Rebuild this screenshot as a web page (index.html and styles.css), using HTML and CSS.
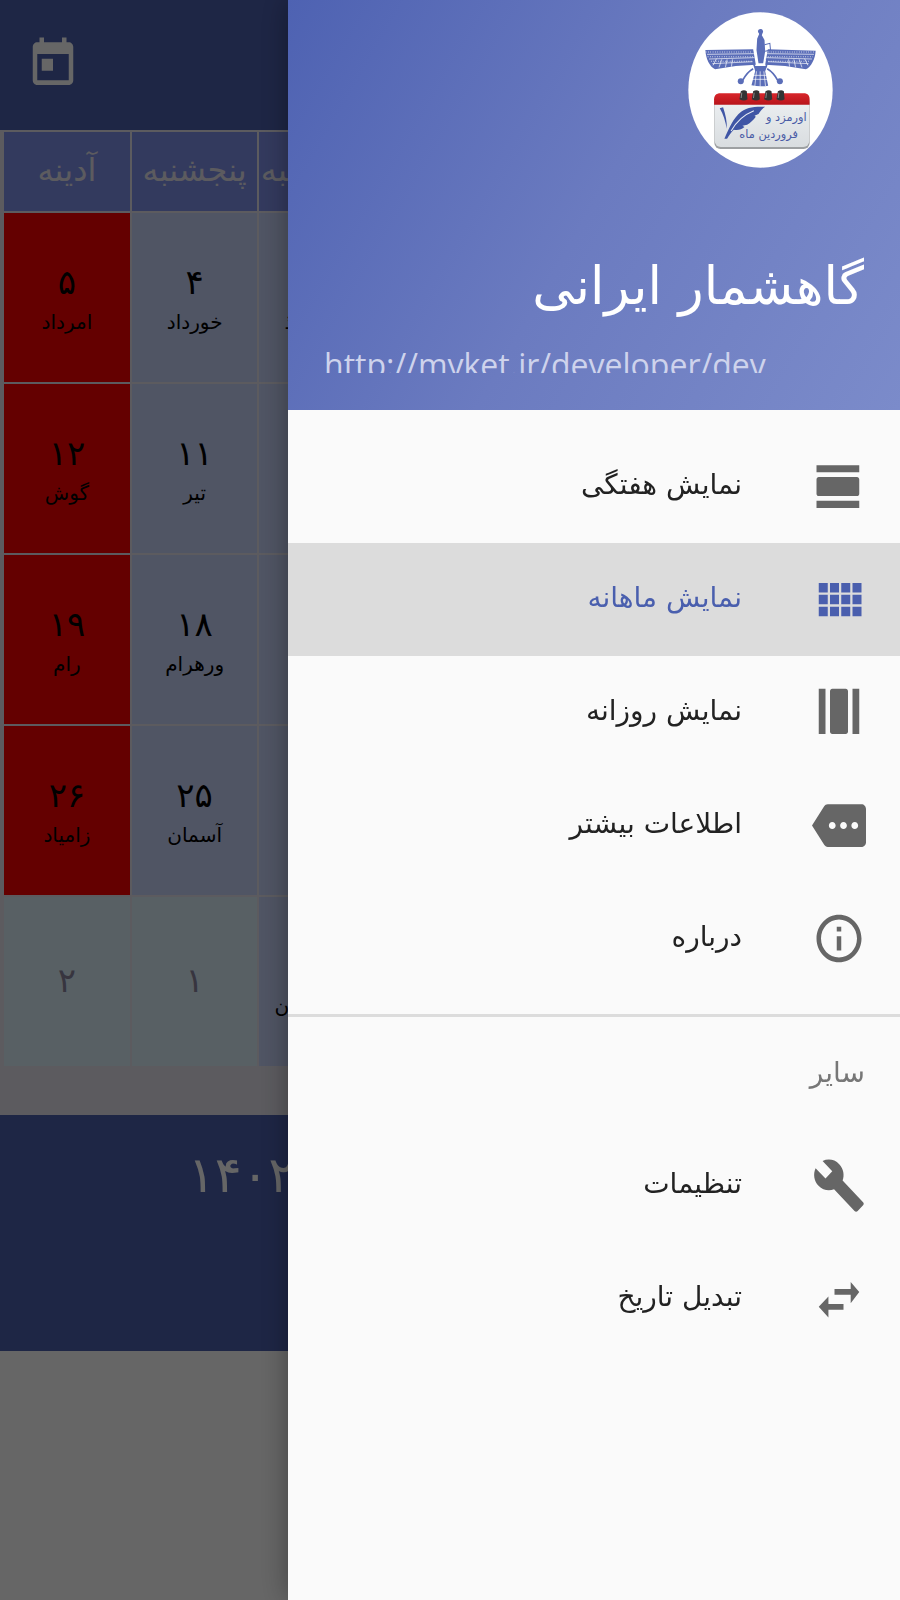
FILE: index.html
```html
<!DOCTYPE html>
<html lang="fa" dir="rtl">
<head>
  <meta charset="UTF-8" />
  <meta name="viewport" content="width=device-width, initial-scale=1.0" />
  <title>گاهشمار ایرانی</title>
  <link rel="stylesheet" href="styles.css">
</head>
<body>
  <div class="app">
    <header class="toolbar">
      <button class="today" type="button" aria-label="امروز">
        <svg class="icon" viewBox="0 0 24 24" preserveAspectRatio="none"><path d="M19 3h-1V1h-2v2H8V1H6v2H5c-1.11 0-1.99.9-1.99 2L3 19c0 1.1.89 2 2 2h14c1.1 0 2-.9 2-2V5c0-1.1-.9-2-2-2zm0 16H5V8h14v11zM7 10h5v5H7v-5z"/></svg>
      </button>
    </header>

    <main class="month">
      <table class="calendar">
        <thead>
          <tr><th></th><th></th><th></th><th></th><th>چهارشنبه</th><th>پنجشنبه</th><th>آدینه</th></tr>
        </thead>
        <tbody>
          <tr>
            <td></td><td></td><td></td><td></td>
            <td><b></b><span>سپندارمذ</span></td>
            <td><b>۴</b><span>خورداد</span></td>
            <td class="friday"><b>۵</b><span>امرداد</span></td>
          </tr>
          <tr>
            <td></td><td></td><td></td><td></td><td></td>
            <td><b>۱۱</b><span>تیر</span></td>
            <td class="friday"><b>۱۲</b><span>گوش</span></td>
          </tr>
          <tr>
            <td></td><td></td><td></td><td></td><td></td>
            <td><b>۱۸</b><span>ورهرام</span></td>
            <td class="friday"><b>۱۹</b><span>رام</span></td>
          </tr>
          <tr>
            <td></td><td></td><td></td><td></td><td></td>
            <td><b>۲۵</b><span>آسمان</span></td>
            <td class="friday"><b>۲۶</b><span>زامیاد</span></td>
          </tr>
          <tr>
            <td></td><td></td><td></td><td></td>
            <td><b></b><span>ماراسفندان</span></td>
            <td class="other"><b>۱</b></td>
            <td class="other"><b>۲</b></td>
          </tr>
        </tbody>
      </table>
    </main>

    <footer class="date-bar"><p>۱۴۰۲</p></footer>
  </div>

  <div class="scrim"></div>

  <aside class="drawer">
    <div class="drawer-header">
      <svg class="avatar" viewBox="55 36 434 468" preserveAspectRatio="none">
        <defs>
          <linearGradient id="paper" x1="0" y1="0" x2="0" y2="1">
            <stop offset="0" stop-color="#eef1f3"/>
            <stop offset="1" stop-color="#d9dde0"/>
          </linearGradient>
          <linearGradient id="band" x1="0" y1="0" x2="0" y2="1">
            <stop offset="0" stop-color="#d8262b"/>
            <stop offset="1" stop-color="#b8141b"/>
          </linearGradient>
        </defs>
        <ellipse cx="272" cy="270" rx="216" ry="233" fill="#fff"/>
        <!-- wings -->
        <g fill="#5a6db8">
          <path d="M107 150L250 148l8 46-60 4-62 10c-16-8-28-32-29-58z"/>
          <path d="M437 152L294 148l-8 46 60 4 62 10c16-8 28-32 29-56z"/>
          <path d="M252 198h40l-6 16 9 43q-24 4-50-1l11-42z"/>
          <path d="M264 92l10-4 6 6-4 12 8 14 2 34-6 36h-14l-6-40 2-34 6-14z"/>
        </g>
        <g fill="none" stroke="#fff" stroke-width="2">
          <path d="M112 163l140-2M118 177l136-4M128 191l122-6M432 163l-140-2M426 177l-136-4M416 191l-122-6"/>
          <path stroke-dasharray="2 5" stroke-width="3" d="M108 156h140M114 170h136M124 184h126M296 156h138M294 170h134M296 184h124"/>
          <path d="M140 176l-10 20M156 178l-8 24M172 178l-5 24M188 178l-3 22M404 176l10 20M388 178l8 24M372 178l5 24M356 178l3 22"/>
          <path d="M250 226h42M248 238h46M260 214l-5 44M271 214v46M282 214l5 44"/>
        </g>
        <g fill="none" stroke="#5a6db8" stroke-width="5">
          <path d="M252 176c-4 14 2 32 20 34 18-2 22-18 18-34M250 206c-14 8-24 20-32 36M292 206c14 8 24 20 32 36"/>
          <path stroke-width="3" d="M284 134l16-4 2 20-16 4"/>
        </g>
        <g fill="#5a6db8">
          <circle cx="213" cy="244" r="9"/>
          <circle cx="330" cy="244" r="9"/>
          <circle cx="272" cy="94" r="7"/>
        </g>
        <!-- calendar sheet -->
        <rect x="134" y="290" width="285" height="157" rx="18" fill="#9da0a2"/>
        <rect x="135" y="282" width="283" height="159" rx="18" fill="url(#paper)"/>
        <path d="M133 314v-16c0-12 8-18 18-18h251c10 0 17 6 17 18v16z" fill="url(#band)"/>
        <g fill="#333">
          <path d="M213 274q10-6 18 0l2 24q-10 7-24 0z"/>
          <path d="M250 274q10-6 18 0l2 24q-10 7-24 0z"/>
          <path d="M287 274q10-6 18 0l2 24q-10 7-24 0z"/>
          <path d="M324 274q10-6 18 0l2 24q-10 7-24 0z"/>
        </g>
        <g fill="none" stroke="#888" stroke-width="3">
          <path d="M216 278l-2 16M253 278l-2 16M290 278l-2 16M327 278l-2 16"/>
        </g>
        <!-- quill -->
        <path d="M150 325l10-3c8 24 12 42 11 64-4-22-10-42-21-61z" fill="#3f55a5"/>
        <path d="M164 416c14-32 26-62 50-81 20-15 44-15 72-15-12 8-14 14-20 22l-12 5 4 3c-8 10-16 18-26 24l-14 3 6 4c-8 7-20 11-32 8-8 8-14 17-20 27z" fill="#3f55a5"/>
        <path d="M184 393c14-26 36-48 68-61" fill="none" stroke="#e9edf5" stroke-width="3"/>
        <text class="logo-text" x="410" y="364">اورمزد و</text>
        <text class="logo-text" x="384" y="414">فروردین ماه</text>
      </svg>
      <h1>گاهشمار ایرانی</h1>
      <a class="link" href="#" dir="ltr">http://myket.ir/developer/dev</a>
    </div>

    <nav class="menu">
      <a class="item" href="#">
        <svg class="icon" viewBox="0 0 24 24" preserveAspectRatio="none"><path d="M2 21h19v-3H2v3zM20 8H3c-.55 0-1 .45-1 1v6c0 .55.45 1 1 1h17c.55 0 1-.45 1-1V9c0-.55-.45-1-1-1zM2 3v3h19V3H2z"/></svg>
        <span>نمایش هفتگی</span>
      </a>
      <a class="item active" href="#">
        <svg class="icon" viewBox="0 0 24 24" preserveAspectRatio="none"><path d="M3 9h4V5H3v4zm0 5h4v-4H3v4zm5 0h4v-4H8v4zm5 0h4v-4h-4v4zM8 9h4V5H8v4zm5-4v4h4V5h-4zm5 9h4v-4h-4v4zM3 19h4v-4H3v4zm5 0h4v-4H8v4zm5 0h4v-4h-4v4zm5 0h4v-4h-4v4zm0-14v4h4V5h-4z"/></svg>
        <span>نمایش ماهانه</span>
      </a>
      <a class="item" href="#">
        <svg class="icon" viewBox="0 0 24 24" preserveAspectRatio="none"><path d="M3 2v19h3V2H3zM16 20V3c0-.55-.45-1-1-1H9c-.55 0-1 .45-1 1v17c0 .55.45 1 1 1h6c.55 0 1-.45 1-1zM18 2v19h3V2h-3z"/></svg>
        <span>نمایش روزانه</span>
      </a>
      <a class="item" href="#">
        <svg class="icon" viewBox="0 0 24 24" preserveAspectRatio="none"><path d="M22 3H7c-.69 0-1.23.35-1.59.88L0 12l5.41 8.11c.36.53.9.89 1.59.89h15c1.1 0 2-.9 2-2V5c0-1.1-.9-2-2-2zM9 13.5c-.83 0-1.5-.67-1.5-1.5s.67-1.5 1.5-1.5 1.5.67 1.5 1.5-.67 1.5-1.5 1.5zm5 0c-.83 0-1.5-.67-1.5-1.5s.67-1.5 1.5-1.5 1.5.67 1.5 1.5-.67 1.5-1.5 1.5zm5 0c-.83 0-1.5-.67-1.5-1.5s.67-1.5 1.5-1.5 1.5.67 1.5 1.5-.67 1.5-1.5 1.5z"/></svg>
        <span>اطلاعات بیشتر</span>
      </a>
      <a class="item" href="#">
        <svg class="icon" viewBox="0 0 24 24" preserveAspectRatio="none"><path d="M11 17h2v-6h-2v6zm1-15C6.48 2 2 6.48 2 12s4.48 10 10 10 10-4.48 10-10S17.52 2 12 2zm0 18c-4.41 0-8-3.59-8-8s3.59-8 8-8 8 3.59 8 8-3.59 8-8 8zM11 9h2V7h-2v2z"/></svg>
        <span>درباره</span>
      </a>
    </nav>

    <nav class="menu other-menu">
      <h2>سایر</h2>
      <a class="item" href="#">
        <svg class="icon" viewBox="0 0 24 24" preserveAspectRatio="none"><path d="M22.7 19l-9.1-9.1c.9-2.3.4-5-1.5-6.9-2-2-5-2.4-7.4-1.3L9 6 6 9 1.6 4.7C.4 7.1.9 10.1 2.9 12.1c1.9 1.9 4.6 2.4 6.9 1.5l9.1 9.1c.4.4 1 .4 1.4 0l2.3-2.3c.5-.4.5-1.1.1-1.4z"/></svg>
        <span>تنظیمات</span>
      </a>
      <a class="item" href="#">
        <svg class="icon" viewBox="0 0 24 24" preserveAspectRatio="none"><path d="M7.3 11.2L3 15.5 7.3 20v-3.3H14v-2.4H7.300zM21 9.300L17.200 5v3H10v2.400h7.200V14z"/></svg>
        <span>تبدیل تاریخ</span>
      </a>
    </nav>
  </aside>
</body>
</html>
```

FILE: styles.css
```css
* {
  box-sizing: border-box;
}
body {
  margin: 0;
  font-family: "DejaVu Sans", sans-serif;
  background: #fff;
  color: #000;
}
.icon {
  width: 54px;
  height: 57px;
  fill: currentColor;
  flex: none;
}
.app {
  min-height: 100vh;
  overflow: hidden;
}
.toolbar {
  display: flex;
  justify-content: flex-end;
  height: 130px;
  padding: 34px 26px;
  background: #4b5fad;
}
.today {
  padding: 0;
  border: 0;
  background: none;
  color: #fff;
}
.month {
  padding: 0 2px 47px;
  background: #e6e4ee;
}
.calendar {
  width: 100%;
  table-layout: fixed;
  border-spacing: 2px;
}
.calendar th {
  height: 79px;
  padding: 0 0 4px;
  background: #8091eb;
  color: #e6e4ee;
  font-size: 32px;
  font-weight: normal;
  line-height: 40px;
  white-space: nowrap;
}
.calendar td {
  height: 169px;
  padding: 4px 0 0;
  background: #c8d4fa;
  text-align: center;
}
.calendar b {
  display: block;
  height: 44px;
  font-size: 34px;
  font-weight: normal;
  line-height: 44px;
}
.calendar span {
  display: block;
  height: 36px;
  font-size: 20px;
  line-height: 36px;
  white-space: nowrap;
}
.calendar .friday {
  background: #fa0000;
}
.calendar .other {
  padding-bottom: 8px;
  background: #dcf0fa;
  color: #8a859f;
}
.date-bar {
  height: 236px;
  padding: 24px 188px;
  background: #4b5fad;
  color: #fff;
  text-align: left;
}
.date-bar p {
  margin: 0;
  font-size: 50px;
  line-height: 72px;
}
.scrim {
  position: fixed;
  inset: 0;
  background: rgba(0, 0, 0, 0.6);
}
.drawer {
  position: fixed;
  top: 0;
  right: 0;
  bottom: 0;
  width: 68%;
  background: #fafafa;
  box-shadow: 0 0 28px rgba(0, 0, 0, 0.35);
}
.drawer-header {
  display: flex;
  flex-direction: column;
  height: 410px;
  padding: 12px 36px 0;
  background: linear-gradient(120deg, #4e62b2, #6b7bc0 50%, #7b8bca);
  color: #fff;
}
.avatar {
  width: 145px;
  height: 156px;
  margin-right: 31px;
}
.logo-text {
  font-size: 34px;
  fill: #4a5ca6;
  direction: rtl;
}
.drawer-header h1 {
  margin: 76px 0 0;
  font-size: 52px;
  font-weight: normal;
  line-height: 84px;
  white-space: nowrap;
}
.link {
  height: 33px;
  margin-top: 12px;
  overflow: hidden;
  color: #ced3ec;
  font-family: "Open Sans", sans-serif;
  font-size: 32px;
  line-height: 50px;
  text-align: left;
  text-decoration: none;
  white-space: nowrap;
}
.menu {
  padding: 20px 0 19px;
}
.item {
  display: flex;
  align-items: center;
  gap: 70px;
  height: 113px;
  padding: 0 34px;
  color: #666;
  text-decoration: none;
}
.item span {
  padding-bottom: 4px;
  color: #222;
  font-size: 28px;
  line-height: 44px;
}
.active {
  background: #dcdcdc;
}
.active,
.active span {
  color: #4a5fae;
}
.other-menu {
  padding-top: 0;
  border-top: 3px solid #dcdcdc;
}
.other-menu h2 {
  margin: 0;
  padding: 0 35px;
  color: #777;
  font-size: 28px;
  font-weight: normal;
  line-height: 112px;
}
```
